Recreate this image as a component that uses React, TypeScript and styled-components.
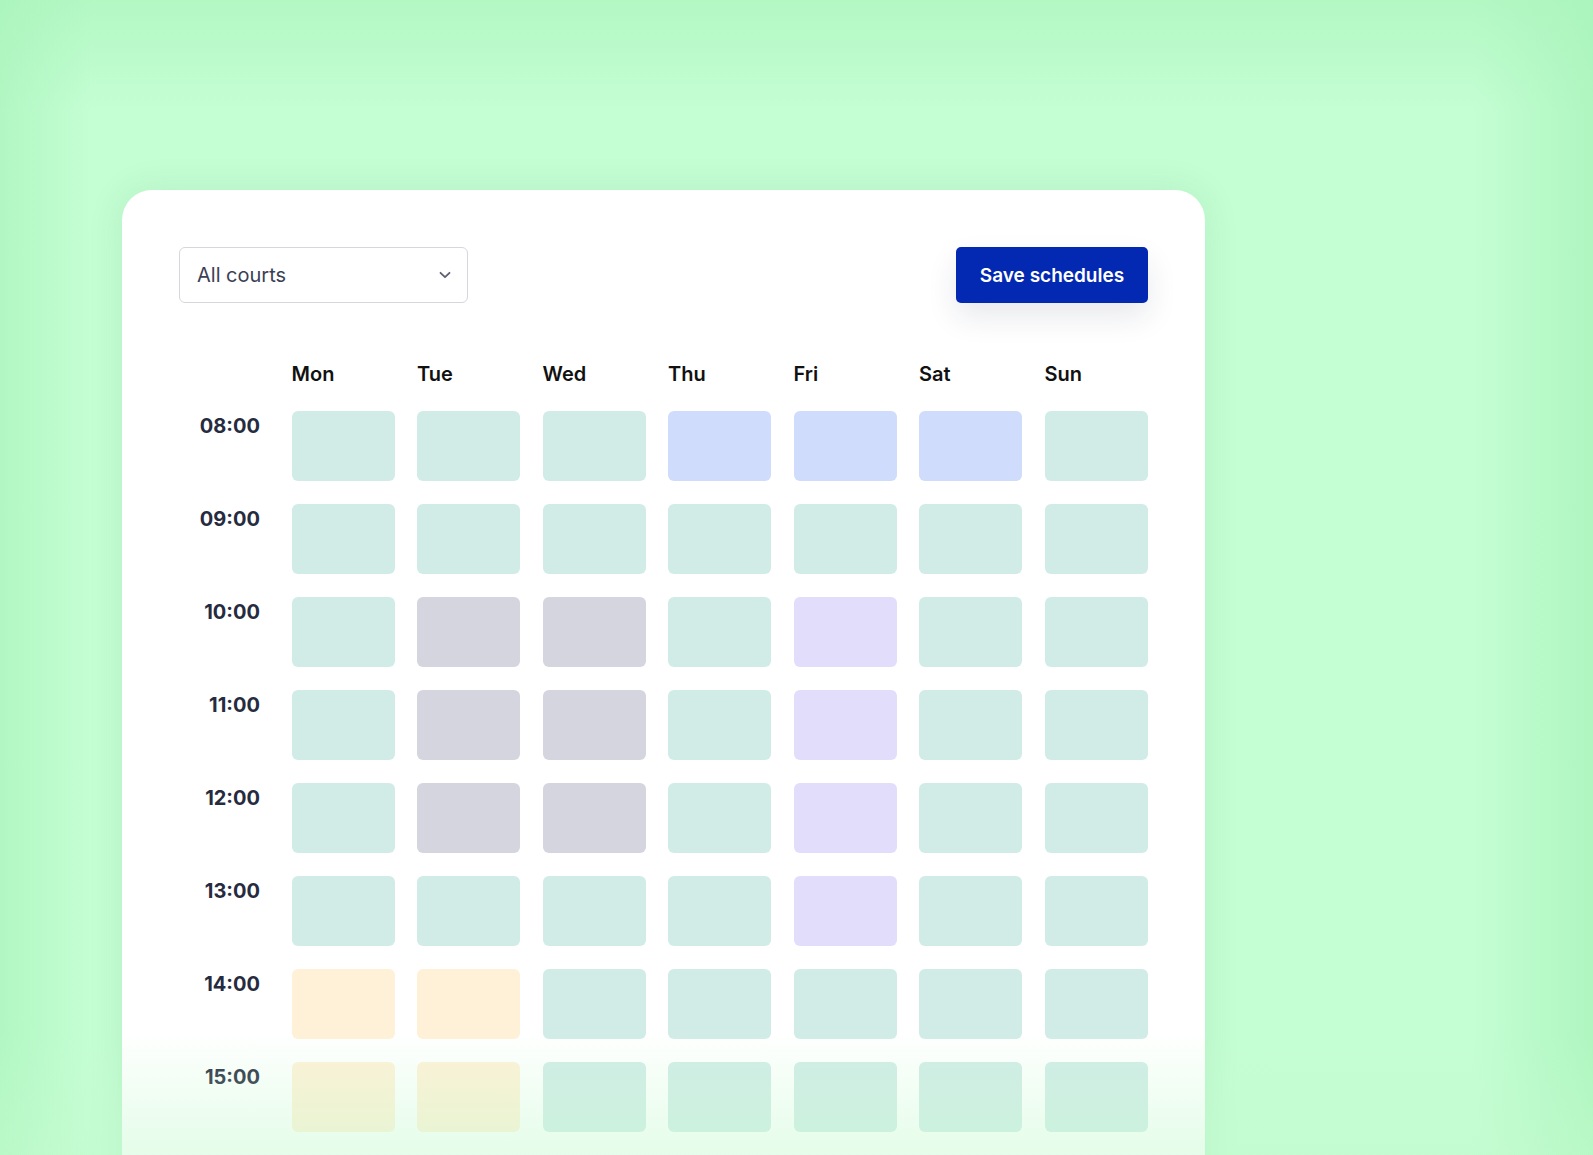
import React from "react";
import styled, { createGlobalStyle } from "styled-components";

type Slot = "open" | "booked" | "blocked" | "event" | "pending";

const days = ["Mon", "Tue", "Wed", "Thu", "Fri", "Sat", "Sun"];

// one string per hour, one letter per day
const rows: { time: string; slots: string }[] = [
    { time: "08:00", slots: "oooBBBo" },
    { time: "09:00", slots: "ooooooo" },
    { time: "10:00", slots: "oGGoPoo" },
    { time: "11:00", slots: "oGGoPoo" },
    { time: "12:00", slots: "oGGoPoo" },
    { time: "13:00", slots: "ooooPoo" },
    { time: "14:00", slots: "YYooooo" },
    { time: "15:00", slots: "YYooooo" },
];

const slotKind: Record<string, Slot> = {
    o: "open",
    B: "booked",
    G: "blocked",
    P: "event",
    Y: "pending",
};

const slotColor: Record<Slot, string> = {
    open: "#d1ece7",
    booked: "#cfdcfb",
    blocked: "#d4d5de",
    event: "#e2ddfb",
    pending: "#fff1d7",
};

export default function App() {
    return (
        <>
            <GlobalStyle />
            <Page>
                <Card>
                    <Toolbar>
                        <CourtSelect>
                            <span>All courts</span>
                            <svg width="12" height="8" viewBox="0 0 12 8" fill="none">
                                <path
                                    d="M1.5 1.8 6 6.2l4.5-4.4"
                                    stroke="#5c5f75"
                                    strokeWidth="1.8"
                                    strokeLinecap="round"
                                    strokeLinejoin="round"
                                />
                            </svg>
                        </CourtSelect>
                        <SaveButton>Save schedules</SaveButton>
                    </Toolbar>

                    <ScheduleGrid>
                        <span />
                        {days.map((d) => (
                            <DayHeader key={d}>{d}</DayHeader>
                        ))}
                        {rows.map((row) => (
                            <React.Fragment key={row.time}>
                                <TimeLabel>{row.time}</TimeLabel>
                                {row.slots.split("").map((s, i) => (
                                    <SlotCell key={i} $kind={slotKind[s]} />
                                ))}
                            </React.Fragment>
                        ))}
                    </ScheduleGrid>
                </Card>
                <BottomFade />
            </Page>
        </>
    );
}

const GlobalStyle = createGlobalStyle`
    html, body {
        margin: 0;
        padding: 0;
    }
    body {
        font-family: Inter, "Noto Sans", sans-serif;
        overflow: hidden;
    }
`;

const Page = styled.div`
    position: relative;
    box-sizing: border-box;
    height: 1155px;
    overflow: hidden;
    padding: 190px 0 0 122px;
    background:
        linear-gradient(to right, rgba(170, 244, 188, 0.7) 0, rgba(170, 244, 188, 0) 90px),
        linear-gradient(to left, rgba(170, 244, 188, 0.8) 0, rgba(170, 244, 188, 0) 120px),
        linear-gradient(to bottom, rgba(175, 246, 192, 0.8) 0, rgba(175, 246, 192, 0) 110px),
        #c4fed3;
`;

const Card = styled.div`
    box-sizing: border-box;
    width: 1083px;
    min-height: 1100px;
    padding: 57px;
    background: #ffffff;
    border-radius: 30px;
    box-shadow: 0 0 36px rgba(40, 120, 60, 0.1);
`;

const Toolbar = styled.div`
    display: flex;
    align-items: center;
    justify-content: space-between;
    margin-bottom: 57px;
`;

const CourtSelect = styled.div`
    box-sizing: border-box;
    width: 289px;
    height: 56px;
    display: flex;
    align-items: center;
    justify-content: space-between;
    padding: 0 16px 0 17px;
    border: 1.5px solid #d5d7dd;
    border-radius: 6px;
    font-size: 20px;
    color: #3b3f55;
`;

const SaveButton = styled.button`
    width: 192px;
    height: 56px;
    border: 0;
    border-radius: 5px;
    background: #0328b1;
    color: #ffffff;
    font-family: Inter, "Noto Sans", sans-serif;
    font-size: 19px;
    font-weight: 600;
    box-shadow: 0 14px 30px rgba(30, 40, 80, 0.1);
    cursor: pointer;
`;

const ScheduleGrid = styled.div`
    display: grid;
    grid-template-columns: 90px repeat(7, 103px);
    grid-template-rows: 28px;
    grid-auto-rows: 70.5px;
    column-gap: 22.5px;
    row-gap: 22.5px;
`;

const DayHeader = styled.div`
    font-size: 20px;
    line-height: 28px;
    font-weight: 600;
    color: #111111;
`;

const TimeLabel = styled.div`
    padding: 1px 9px 0 0;
    text-align: right;
    font-size: 20px;
    line-height: 28px;
    font-weight: 700;
    color: #262b40;
`;

const SlotCell = styled.div<{ $kind: Slot }>`
    border-radius: 6px;
    background: ${(p) => slotColor[p.$kind]};
`;

// the soft green wash over the bottom of the page
const BottomFade = styled.div`
    position: absolute;
    left: 0;
    right: 0;
    bottom: 0;
    height: 125px;
    pointer-events: none;
    background: linear-gradient(
        to bottom,
        rgba(196, 250, 206, 0) 0,
        rgba(196, 250, 206, 0.45) 100%
    );
`;
